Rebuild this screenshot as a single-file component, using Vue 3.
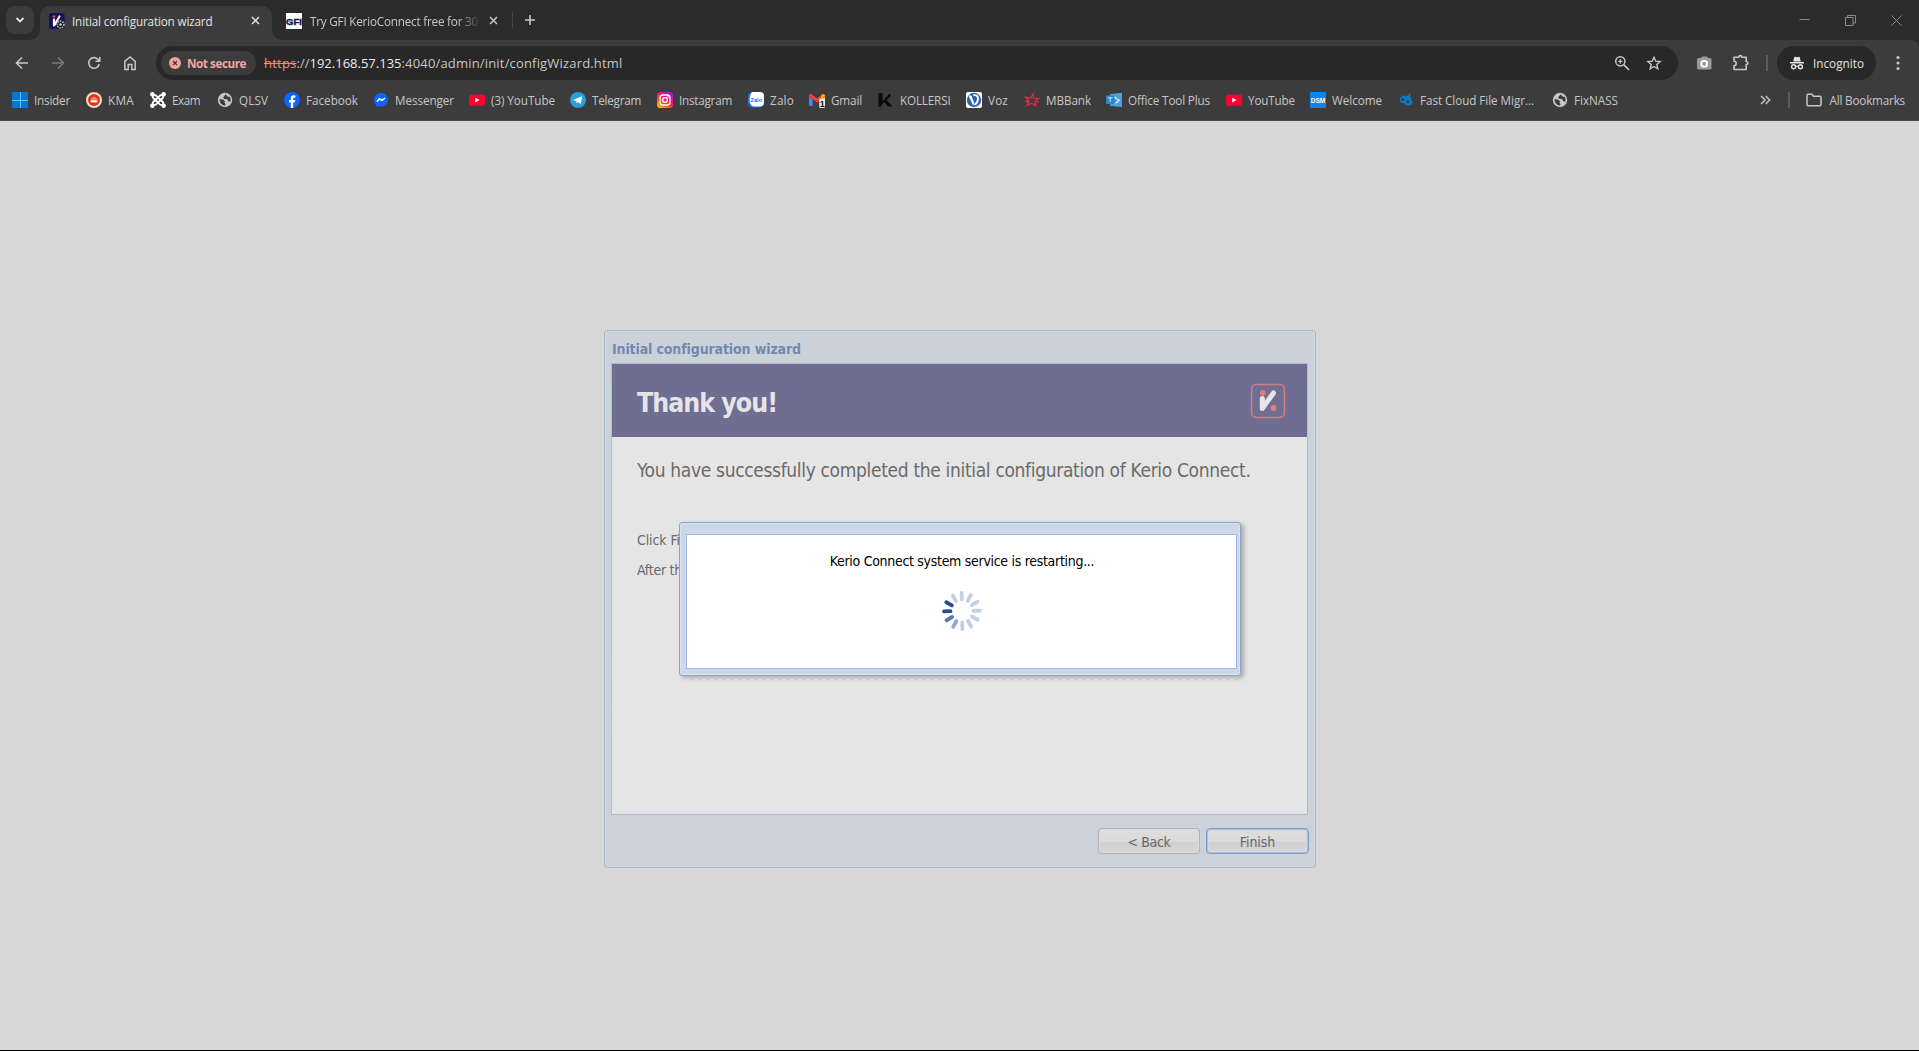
<script setup>
// Stretches or tightens a label so that it takes the given width in pixels.
const vFit = {
  mounted(el, { value }) {
    const natural = el.getBoundingClientRect().width
    const count = el.textContent.length
    el.style.letterSpacing = (value - natural) / count + 'px'
  },
}

// slot: width of icon and label up to the next bookmark; text: width of the label
const bookmarks = [
  { icon: 'insider', label: 'Insider', slot: 74, text: 36 },
  { icon: 'kma', label: 'KMA', slot: 64, text: 26 },
  { icon: 'exam', label: 'Exam', slot: 67, text: 28 },
  { icon: 'globe', label: 'QLSV', slot: 67, text: 29 },
  { icon: 'facebook', label: 'Facebook', slot: 89, text: 52 },
  { icon: 'messenger', label: 'Messenger', slot: 96, text: 59 },
  { icon: 'youtube', label: '(3) YouTube', slot: 101, text: 64 },
  { icon: 'telegram', label: 'Telegram', slot: 87, text: 49 },
  { icon: 'instagram', label: 'Instagram', slot: 91, text: 53 },
  { icon: 'zalo', label: 'Zalo', slot: 61, text: 24 },
  { icon: 'gmail', label: 'Gmail', slot: 69, text: 31 },
  { icon: 'koller', label: 'KOLLERSI', slot: 88, text: 50.5 },
  { icon: 'voz', label: 'Voz', slot: 58, text: 20 },
  { icon: 'mb', label: 'MBBank', slot: 82, text: 45 },
  { icon: 'office', label: 'Office Tool Plus', slot: 120, text: 82 },
  { icon: 'youtube', label: 'YouTube', slot: 84, text: 47 },
  { icon: 'dsm', label: 'Welcome', slot: 88, text: 50 },
  { icon: 'cloud', label: 'Fast Cloud File Migr...', slot: 154, text: 114 },
  { icon: 'globe', label: 'FixNASS', slot: 90, text: 44 },
]

const spokes = [
  '#c3cfe3', '#c3cfe3', '#c3cfe3', '#c3cfe3', '#c3cfe3', '#c3cfe3',
  '#c3cfe3', '#93a8cf', '#5575b0', '#264f98', '#264f98', '#c3cfe3',
]
</script>

<template>
  <div class="screen">
    <header class="tabstrip">
      <div class="tabsearch">
        <svg width="10" height="8" viewBox="0 0 10 8"><path d="M1.5 2 5 5.5 8.500 2" fill="none" stroke="#e3e3e3" stroke-width="1.8" /></svg>
      </div>
      <div class="tab active">
        <svg class="fav" width="16" height="16" viewBox="0 0 16 16">
          <rect width="15.500" height="16" rx="2.500" fill="#14135a" />
          <circle cx="5" cy="3.600" r="1.400" fill="#ee3d43" />
          <path d="M5 6.500v6M5.500 12 10.500 3.500" stroke="#fff" stroke-width="2.200" stroke-linecap="round" />
          <circle cx="11.500" cy="11.500" r="3.400" fill="#222" stroke="#bbb" stroke-width="1.500" stroke-dasharray="1.500 1" />
          <circle cx="11.500" cy="11.500" r="1.200" fill="#ccc" />
        </svg>
        <span class="tabname"><span v-fit="140.500">Initial configuration wizard</span></span>
        <svg class="x" width="9" height="9" viewBox="0 0 9 9"><path d="M1 1l7 7M8 1 1 8" stroke="#e3e3e3" stroke-width="1.500" /></svg>
      </div>
      <div class="tab idle">
        <svg class="fav" width="16" height="16" viewBox="0 0 16 16">
          <rect width="16" height="16" fill="#fff" />
          <text x="8" y="11.500" text-anchor="middle" font-family="Liberation Sans, sans-serif" font-size="9.500" font-weight="700" textLength="16" lengthAdjust="spacingAndGlyphs" fill="#17154f" stroke="#17154f" stroke-width=".4">GFI</text>
          <path d="M2.500 8h2" stroke="#39a9e0" stroke-width="1.500" />
        </svg>
        <span class="tabname fade"><span v-fit="168">Try GFI KerioConnect free for 30</span></span>
        <svg class="x" width="9" height="9" viewBox="0 0 9 9"><path d="M1 1l7 7M8 1 1 8" stroke="#c7c7c7" stroke-width="1.500" /></svg>
      </div>
      <i class="tabline"></i>
      <svg class="plus" width="12" height="12" viewBox="0 0 12 12"><path d="M6 1v10M1 6h10" stroke="#c7c7c7" stroke-width="1.600" /></svg>
      <div class="winbuttons">
        <svg width="11" height="11" viewBox="0 0 11 11"><path d="M.5 4.500h10" stroke="#8b8b8b" /></svg>
        <svg width="11" height="11" viewBox="0 0 11 11"><path d="M.5 2.500h7.500v8H.5zM2.500 2.500v-2h8v7.500H8" fill="none" stroke="#8b8b8b" /></svg>
        <svg width="11" height="11" viewBox="0 0 11 11"><path d="M.5.5l10 10M10.500.5l-10 10" stroke="#8b8b8b" /></svg>
      </div>
    </header>

    <div class="toolbar">
      <nav class="navs">
        <svg width="16" height="16" viewBox="0 0 16 16"><path d="M14 8H3M8 2.500 2.500 8 8 13.500" fill="none" stroke="#c7c7c7" stroke-width="1.600" /></svg>
        <svg width="16" height="16" viewBox="0 0 16 16"><path d="M2 8h11M8 2.500 13.500 8 8 13.500" fill="none" stroke="#7b7b7b" stroke-width="1.600" /></svg>
        <svg width="16" height="16" viewBox="0 0 16 16"><path d="M13.200 9A5.300 5.300 0 1 1 11.800 4.200L13.500 6M13.700 2v4.300H9.400" fill="none" stroke="#c7c7c7" stroke-width="1.600" /></svg>
        <svg width="16" height="16" viewBox="0 0 16 16"><path d="M2.800 6.300 8 2l5.200 4.300v8.200H9.800V9.500H6.200v5H2.800z" fill="none" stroke="#c7c7c7" stroke-width="1.500" /></svg>
      </nav>
      <div class="omnibox">
        <div class="chip">
          <svg width="12" height="12" viewBox="0 0 12 12"><circle cx="6" cy="6" r="6" fill="#f2a59d" /><path d="M4 4l4 4M8 4 4 8" stroke="#3c3c3c" stroke-width="1.400" /></svg>
          <span><span v-fit="59">Not secure</span></span>
        </div>
        <div class="url"><span v-fit="32.500" class="scheme">https</span><span v-fit="13">://</span><span v-fit="92" class="host">192.168.57.135</span><span v-fit="221">:4040/admin/init/configWizard.html</span></div>
        <svg class="lens" width="16" height="16" viewBox="0 0 16 16"><circle cx="6.300" cy="6.300" r="4.600" fill="none" stroke="#c7c7c7" stroke-width="1.500" /><path d="M9.700 9.700 15 15" stroke="#c7c7c7" stroke-width="1.700" /><path d="M6.300 4.200v4.200M4.200 6.300h4.200" stroke="#c7c7c7" stroke-width="1.300" /></svg>
        <svg width="16" height="16" viewBox="0 0 16 16"><path d="M8 2.200 9.700 6.200l4.400.4-3.300 2.900 1 4.300L8 11.500l-3.800 2.300 1-4.300L1.900 6.600l4.400-.4z" fill="none" stroke="#c7c7c7" stroke-width="1.400" /></svg>
      </div>
      <svg class="camera" width="16" height="16" viewBox="0 0 16 16"><path d="M1 4.500Q1 3 2.500 3H5l1-1.500h5L12 3h2q1.500 0 1.500 1.500V13q0 1.500-1.500 1.500H2.500Q1 14.500 1 13z" fill="#9a9a9a" /><circle cx="8.200" cy="8.800" r="3" fill="#9a9a9a" stroke="#fff" stroke-width="1.700" /></svg>
      <svg class="puzzle" width="18" height="18" viewBox="0 0 18 18"><path d="M2 3.300h4.800c.2-2.300 2.800-2.300 3 0h4.400v4.200c2.400.2 2.400 2.900 0 3.100v4.900H2v-3.700c3-.3 3-4.300 0-4.600z" fill="none" stroke="#c7c7c7" stroke-width="1.600" stroke-linejoin="round" /></svg>
      <i class="bar"></i>
      <div class="incognito">
        <svg width="16" height="16" viewBox="0 0 16 16"><path d="M4.200 6.500 5.300 2.200Q5.500 1.500 6.200 1.700L8 2.200l1.800-.5q.7-.2.9.5l1.100 4.300zM1 7h14v1.400H1z" fill="#e3e3e3" /><circle cx="4.600" cy="11.800" r="2" fill="none" stroke="#e3e3e3" stroke-width="1.400" /><circle cx="11.400" cy="11.800" r="2" fill="none" stroke="#e3e3e3" stroke-width="1.400" /><path d="M6.600 11.500q1.400-.8 2.800 0" fill="none" stroke="#e3e3e3" stroke-width="1.200" /></svg>
        <span><span v-fit="51">Incognito</span></span>
      </div>
      <svg class="dots" width="4" height="16" viewBox="0 0 4 16"><circle cx="2" cy="2.500" r="1.600" fill="#c7c7c7" /><circle cx="2" cy="8" r="1.600" fill="#c7c7c7" /><circle cx="2" cy="13.500" r="1.600" fill="#c7c7c7" /></svg>
    </div>

    <div class="bookmarks">
      <div v-for="(b, i) in bookmarks" :key="i" class="mark" :style="{ width: b.slot + 'px' }">
        <svg width="16" height="16" viewBox="0 0 16 16">
          <template v-if="b.icon === 'insider'">
            <rect width="16" height="16" fill="#0078d7" /><path d="M8.500 0v16M0 8.500h16" stroke="#6cc0f5" stroke-width="1" />
          </template>
          <template v-else-if="b.icon === 'kma'">
            <circle cx="8" cy="8" r="8" fill="#f3d9b8" /><circle cx="8" cy="8" r="6.600" fill="#f8f0e6" /><circle cx="8" cy="8" r="6" fill="#e2301c" /><path d="M4 9.500q0-3 4-5 4 2 4 5l-2-.8-2 .8-2-.8z" fill="#f08a70" /><path d="M4.200 9.800 6.300 8 8 8.800 9.700 8l2.100 1.800-1.800.6H6z" fill="#fff" />
          </template>
          <template v-else-if="b.icon === 'exam'">
            <path d="M3 3.500Q5 2 7 4.500l5 5M13 3.500Q11 2 9 4.500l-5 5M3 12.500q2 1.500 4-1l5-5M13 12.500q-2 1.500-4-1l-5-5M3 3q-1 2 1 4M13 3q1 2-1 4M3 13q-1-2 1-4M13 13q1-2-1-4" fill="none" stroke="#fff" stroke-width="1.800" />
            <circle cx="2.300" cy="2.300" r="2.200" fill="#fff" /><circle cx="13.700" cy="2.300" r="2.200" fill="#fff" /><circle cx="2.300" cy="13.700" r="2.200" fill="#fff" /><circle cx="13.700" cy="13.700" r="2.200" fill="#fff" />
          </template>
          <template v-else-if="b.icon === 'globe'">
            <circle cx="8" cy="8" r="7.200" fill="#c4c7c9" /><path d="M2.300 7.200 6 7.500 8 9.500 7.500 11 8.500 12 8 13.700Q3 13 2.300 7.200M8.500 2.300 7 4.500 6 5.500 7.500 7 10 7l1 2 1.500.5.8 1Q14.500 7 12.500 4.500L11.500 5 10 4z" fill="#3c3c3c" />
          </template>
          <template v-else-if="b.icon === 'facebook'">
            <circle cx="8" cy="8" r="8" fill="#0866ff" /><path d="M6.800 16v-5.500H5V8h1.800V6.500c0-2.300 1.200-3.200 3-3.200q.9 0 1.600.2v2.200h-1c-1 0-1.200.5-1.200 1.200V8h2.100l-.4 2.500H9.200V16z" fill="#fff" />
          </template>
          <template v-else-if="b.icon === 'messenger'">
            <path d="M8 1C4 1 1 3.900 1 7.700c0 2 .8 3.700 2.200 4.900v2.600l2.300-1.200c.8.200 1.600.4 2.500.4 4 0 7-2.900 7-6.700S12 1 8 1z" fill="#0866ff" /><path d="M4 9.800 6.500 6.500 9 8.500 12 6" fill="none" stroke="#fff" stroke-width="1.600" stroke-linejoin="round" />
          </template>
          <template v-else-if="b.icon === 'youtube'">
            <rect y="2.500" width="16" height="11.200" rx="2.800" fill="#f03" /><path d="M6.300 5.800 10.500 8.100 6.300 10.400z" fill="#fff" />
          </template>
          <template v-else-if="b.icon === 'telegram'">
            <circle cx="8" cy="8" r="8" fill="#2ba0db" /><path d="M3 7.900 12.200 4.200 10.800 12 7.800 9.900 6.400 11.300 6 9z" fill="#fff" /><path d="M6 9l4.500-3.200L7 9.400l-.6 1.900z" fill="#b9d8ea" />
          </template>
          <template v-else-if="b.icon === 'instagram'">
            <defs><linearGradient id="ig" x1=".1" y1="1" x2=".8" y2="0"><stop offset="0" stop-color="#ffc800" /><stop offset=".35" stop-color="#ff4b20" /><stop offset=".65" stop-color="#f0137e" /><stop offset="1" stop-color="#9b1fe8" /></linearGradient></defs>
            <rect width="16" height="16" rx="3.600" fill="url(#ig)" /><rect x="3" y="3" width="10" height="10" rx="3" fill="none" stroke="#fff" stroke-width="1.300" /><circle cx="8" cy="8" r="2.400" fill="none" stroke="#fff" stroke-width="1.300" /><circle cx="11" cy="5" r=".8" fill="#fff" />
          </template>
          <template v-else-if="b.icon === 'zalo'">
            <rect width="15" height="15.500" rx="4.500" fill="#1670ef" /><path d="M4 0h8q4 0 4 4v6.500q0 4-4 4H5Q1.500 12 1.500 7.500T4 0z" fill="#fff" />
            <text x="2.600" y="9.600" font-family="Liberation Sans, sans-serif" font-weight="700" font-size="5.500" textLength="11.500" lengthAdjust="spacingAndGlyphs" fill="#1670ef">Zalo</text>
          </template>
          <template v-else-if="b.icon === 'gmail'">
            <path d="M0 4.500 3.700 7.300V14H1.200Q0 14 0 12.800z" fill="#4285f4" /><path d="M12.300 7.300 16 4.500V9h-3.700z" fill="#fbbc04" /><path d="M0 4.500V3.700Q.3 1.500 2.700 2.300L8 6.300l5.300-4q2.400-.8 2.700 1.400v.8L8 10.500z" fill="#ea4335" /><path d="M12.300 3.100Q16 .8 16 4L12.300 7z" fill="#fbbc04" />
            <rect x="10.200" y="6.500" width="6" height="9.500" rx="1.200" fill="#e9ece6" /><text x="13.200" y="14.500" text-anchor="middle" font-family="Liberation Sans, sans-serif" font-size="9" font-weight="700" fill="#111">1</text>
          </template>
          <template v-else-if="b.icon === 'koller'">
            <path d="M.5 1h4v8.500L11 2l2 .5-.5 2-4 3.500 6 6.500H10L6 10l-3.500 5H.5z" fill="#0b0b0b" />
          </template>
          <template v-else-if="b.icon === 'voz'">
            <rect width="16" height="16" rx="2" fill="#fff" /><circle cx="8" cy="8" r="7.200" fill="#2a62ae" /><path d="M2.500 3.500h2.800L8 10.500 7.300 14z" fill="#fff" /><path d="M7.300 3.200Q12.500 2.500 12 7.500 11.500 11 8.500 12.800" fill="none" stroke="#fff" stroke-width="1.900" />
          </template>
          <template v-else-if="b.icon === 'mb'">
            <path d="M9.500 1.500 9.200 5.800 14.500 6.500 10.800 9.300 12 14 8 11.200 3 13.500 5.200 9 1.500 5.200l5 .9zM1 9.500l3.500-.5M12.500 9.500l2.500.5" fill="none" stroke="#e5284a" stroke-width="1.300" />
          </template>
          <template v-else-if="b.icon === 'office'">
            <path d="M4 2 16 .8V15L4 14z" fill="#4a9fd8" /><path d="M8.500 5 13 8.500 9 12" fill="none" stroke="#e7f3fb" stroke-width="1.600" stroke-dasharray="2.500 1" /><rect y="3.500" width="8.500" height="8.500" fill="#2f86c6" /><path d="M2 5.700h4.500M4.250 5.700V10" stroke="#9ad0f5" stroke-width="1.400" />
          </template>
          <template v-else-if="b.icon === 'dsm'">
            <rect width="16" height="16" rx="1" fill="#0a84f0" /><text x="8" y="10.700" text-anchor="middle" font-family="Liberation Sans, sans-serif" font-size="7" font-weight="700" textLength="14.500" lengthAdjust="spacingAndGlyphs" fill="#fff">DSM</text>
          </template>
          <template v-else>
            <path d="M4.500 4q2-1 3.500.5 1-1 2.500-1L10.700 2 12 1.300l.7 1-.7 1.900q2 1.300 1.300 3.800 1.500 1 1.200 3.500-1.500 2.500-4.500 2Q8 13.500 7 11.500 3 11.500 1.500 8q.3-3 3-4z" fill="#0b79c4" /><circle cx="4.800" cy="7.600" r="1.500" fill="#3c3c3c" /><circle cx="9.800" cy="9.800" r="1.500" fill="#3c3c3c" />
          </template>
        </svg>
        <span v-fit="b.text">{{ b.label }}</span>
      </div>
      <div class="overflow">
        <svg class="chev" width="11" height="10" viewBox="0 0 11 10"><path d="M1 1l4 4-4 4M5.700 1l4 4-4 4" fill="none" stroke="#c7c7c7" stroke-width="1.500" /></svg>
        <i class="bar"></i>
        <svg class="folder" width="16" height="14" viewBox="0 0 16 14"><path d="M1 2.200Q1 1.300 1.900 1.300h4l1.500 1.900H14q1 0 1 1v7.500q0 1-1 1H2q-1 0-1-1z" fill="none" stroke="#c7c7c7" stroke-width="1.500" /></svg>
        <span v-fit="75.500">All Bookmarks</span>
      </div>
    </div>

    <main class="page">
      <section class="wizard">
        <div class="wtitle"><span v-fit="188.500">Initial configuration wizard</span></div>
        <div class="wbody">
          <div class="banner">
            <h1><span v-fit="140">Thank you!</span></h1>
            <svg width="36" height="36" viewBox="0 0 36 36"><rect x="1.600" y="1.600" width="32.800" height="32.800" rx="4.500" fill="none" stroke="#cf7f84" stroke-width="1.500" /><circle cx="12.700" cy="9.800" r="2.900" fill="#e07e7c" /><circle cx="23.500" cy="25" r="2.900" fill="#e07e7c" /><path d="M12.300 15.500V25.500L23.500 10" fill="none" stroke="#e5e5e8" stroke-width="5" stroke-linecap="round" stroke-linejoin="round" /></svg>
          </div>
          <p class="lead"><span v-fit="613.500">You have successfully completed the initial configuration of Kerio Connect.</span></p>
          <p class="small"><span v-fit="43">Click Fi</span></p>
          <p class="small"><span v-fit="45">After th</span></p>
        </div>
        <div class="actions">
          <button class="btn"><span v-fit="43">&lt; Back</span></button>
          <button class="btn primary"><span v-fit="35.500">Finish</span></button>
        </div>
        <div class="popup">
          <div class="pbody">
            <p><span v-fit="264.500">Kerio Connect system service is restarting...</span></p>
            <svg width="42" height="42" viewBox="-21 -21 42 42">
              <line v-for="(c, i) in spokes" :key="i" x1="0" y1="-11.500" x2="0" y2="-18" :stroke="c" stroke-width="3.800" stroke-linecap="round" :transform="`rotate(${i * 30 - 1})`" />
            </svg>
          </div>
        </div>
      </section>
    </main>
  </div>
</template>

<style>
body { margin: 0; overflow: hidden; background: #d8d8d8; }
</style>

<style scoped>
.screen {
  width: 1919px; height: 1051px; box-sizing: border-box; display: flex; flex-direction: column;
  border-bottom: 1px solid #050505; background: #d8d8d8; overflow: hidden;
  font-family: "Open Sans", "Noto Sans", sans-serif; font-size: 11.7px; color: #c7c7c7; white-space: nowrap;
}
svg { flex: none; display: block; }
p, h1 { margin: 0; }
.tabstrip { height: 40px; flex: none; display: flex; align-items: center; background: #2b2b2b; padding-left: 6px; }
.tabsearch { width: 28px; height: 28px; border-radius: 9px; background: #3c3c3c; display: flex; align-items: center; justify-content: center; }
.tab { height: 34px; align-self: flex-end; display: flex; align-items: center; box-sizing: border-box; padding-bottom: 5px; }
.tab.active { position: relative; width: 232px; margin-left: 6px; padding-left: 9px; background: #3c3c3c; border-radius: 10px 10px 0 0; color: #e3e3e3; }
.tab.active::before, .tab.active::after { content: ""; position: absolute; bottom: 0; width: 10px; height: 10px; }
.tab.active::before { left: -10px; background: radial-gradient(circle at 0 0, transparent 9.5px, #3c3c3c 10px); }
.tab.active::after { right: -10px; background: radial-gradient(circle at 100% 0, transparent 9.5px, #3c3c3c 10px); }
.tab.idle { width: 227px; padding-left: 14px; }
.tabname { width: 179px; margin-left: 7px; line-height: 16px; }
.tab.idle .tabname { width: 168px; margin-left: 8px; margin-right: 11px; overflow: hidden; }
.fade { -webkit-mask-image: linear-gradient(90deg, #000 148px, transparent 171px); mask-image: linear-gradient(90deg, #000 148px, transparent 171px); }
.tabline { width: 1px; height: 16px; margin-left: 13px; background: #454545; }
.plus { margin-left: 11px; }
.winbuttons { margin-left: auto; margin-right: 17px; display: flex; gap: 35px; }
.toolbar { height: 46px; flex: none; display: flex; align-items: center; background: #3c3c3c; border-radius: 0 8px 0 0; box-shadow: 8px -8px 0 #2b2b2b; clip-path: inset(0); }
.navs { display: flex; gap: 20px; margin-left: 14px; }
.omnibox { width: 1522px; height: 34px; margin-left: 18px; border-radius: 17px; background: #282828; display: flex; align-items: center; box-sizing: border-box; padding: 0 16px 0 5px; }
.chip { width: 95px; height: 24px; border-radius: 12px; background: #3c3c3c; display: flex; align-items: center; gap: 6px; padding-left: 8px; box-sizing: border-box; color: #f2a59d; font-weight: 700; }
.url { margin-left: 8px; display: flex; font-size: 13px; line-height: 20px; }
.scheme { color: #f28b82; text-decoration: line-through; }
.host { color: #ececec; }
.lens { margin-left: auto; margin-right: 16px; }
.camera { margin-left: 18px; }
.puzzle { margin-left: 20px; }
.bar { width: 2px; height: 16px; background: #5c5c5c; }
.toolbar .bar { margin-left: 16px; }
.incognito { width: 99px; height: 34px; margin-left: 9px; border-radius: 17px; background: #282828; box-sizing: border-box; padding-left: 12px; display: flex; align-items: center; gap: 8px; color: #e3e3e3; }
.dots { margin-left: 20px; }
.bookmarks { height: 35px; flex: none; display: flex; align-items: center; box-sizing: border-box; padding: 0 0 7px 12px; background: #3c3c3c; border-bottom: 1px solid #4a4a4a; }
.mark { display: flex; align-items: center; gap: 6px; flex: none; line-height: 16px; }
.overflow { margin-left: auto; margin-right: 14px; display: flex; align-items: center; }
.overflow .bar { margin: 0 16px 0 17px; }
.folder { margin-right: 8px; }

.page { flex: 1; padding: 209px 0 0 604px; font-family: "DejaVu Sans Condensed", "DejaVu Sans", sans-serif; font-stretch: condensed; }
.wizard { position: relative; width: 712px; height: 538px; box-sizing: border-box; border: 1px solid #acb8c9; border-radius: 3px; box-shadow: inset 0 0 0 1px #d3d8df; padding: 0 6px; background: linear-gradient(#cbd1d9, #cad2da 60px, #ccd1da); }
.wtitle { height: 32px; line-height: 37px; padding-left: 1px; font-size: 14px; font-weight: 700; color: #7189b1; }
.wbody { height: 452px; width: 697px; box-sizing: border-box; border: 1px solid #abbdd7; background: #e5e5e5; color: #6a6a6a; }
.banner { height: 73px; background: #6f6e92; display: flex; align-items: center; justify-content: space-between; padding: 0 21px 0 25px; box-sizing: border-box; }
.banner h1 { font-size: 26.5px; line-height: 30px; font-weight: 700; color: #e5e5e8; margin-top: 5px; }
.lead { font-size: 19px; line-height: 24px; padding: 21px 0 49px 25px; }
.small { font-size: 14px; line-height: 18px; padding-left: 25px; margin-bottom: 12px; }
.actions { display: flex; justify-content: flex-end; gap: 6px; margin-top: 13px; }
.btn { width: 102px; height: 26px; padding: 2px 0 0; border: 1px solid #b1b1b1; border-radius: 4px; background: linear-gradient(#dedede, #dadada 54%, #d0d0d0 55%, #d6d6d6); box-shadow: inset 0 0 0 1px #dfdfdf; font-family: inherit; font-stretch: inherit; font-size: 14px; line-height: 22px; color: #666; }
.primary { width: 103px; border-color: #7f9bc4; box-shadow: inset 0 0 0 1px #a9bcd8, inset 0 0 0 2px #d3dae4; }
.popup { position: absolute; left: 74px; top: 191px; width: 562px; height: 154px; box-sizing: border-box; border: 1px solid #8aa4c6; border-radius: 3px; background: #ccd8e7; box-shadow: inset 0 0 0 1px #dbe3ee, 3px 2px 4px rgba(0, 0, 0, .25); padding: 11px 3px 6px 6px; }
.popup::after { content: ""; position: absolute; left: 10px; bottom: -5px; width: 549px; height: 1px; background: repeating-linear-gradient(90deg, #cacaca 0 5px, #dedede 5px 8px); }
.pbody { height: 100%; box-sizing: border-box; border: 1px solid #a2b9e3; background: #fff; color: #000; display: flex; flex-direction: column; align-items: center; font-size: 14px; padding-left: 1px; }
.pbody p { line-height: 18px; margin: 17px 0 20px; }
</style>
